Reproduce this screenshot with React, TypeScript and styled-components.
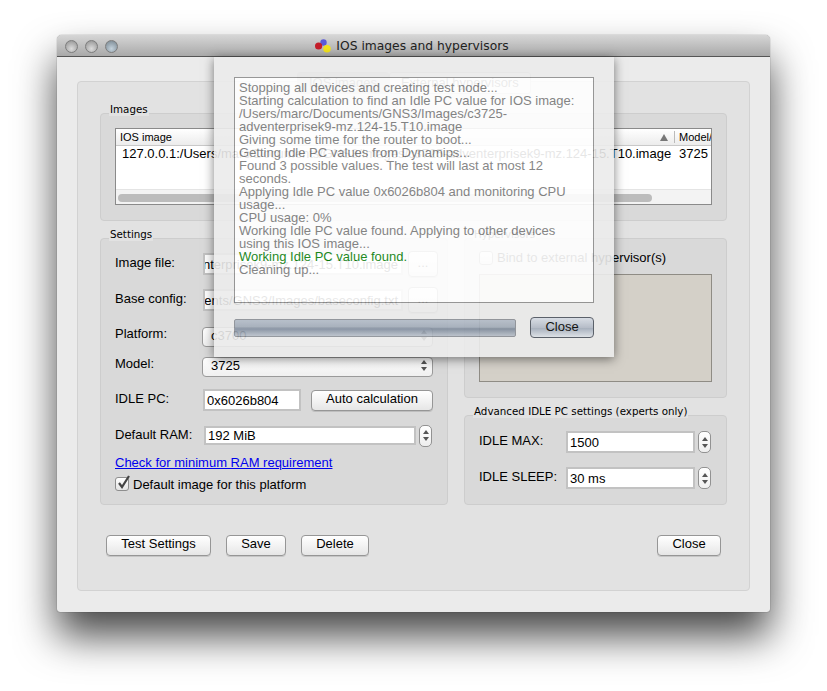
import React from "react";
import styled, {createGlobalStyle} from "styled-components";

const GlobalStyle = createGlobalStyle`
    html, body {
        margin: 0;
        background: #ffffff;
        font-family: "Liberation Sans", Arial, sans-serif;
        color: #000000;
    }
`;

const Desktop = styled.div`
    width: 827px;
    height: 691px;
    padding: 35px 0 0 57px;
    box-sizing: border-box;
    overflow: hidden;
`;

const Window = styled.div`
    position: relative;
    width: 713px;
    height: 577px;
    background: #ebebeb;
    border-radius: 5px 5px 3px 3px;
    box-shadow: 0 24px 40px rgba(0, 0, 0, 0.72), 0 0 1px rgba(0, 0, 0, 0.7);
`;

const TitleBar = styled.div`
    position: relative;
    height: 22px;
    box-sizing: border-box;
    display: flex;
    align-items: center;
    justify-content: center;
    gap: 5px;
    padding-right: 3px;
    background: linear-gradient(#d6d6d6, #a9a9a9);
    border-bottom: 1px solid #555555;
    border-radius: 5px 5px 0 0;
    font-family: "DejaVu Sans", sans-serif;
    font-size: 12.3px;
    color: #222222;
`;

const Lights = styled.div`
    position: absolute;
    left: 8px;
    top: 5px;
    display: flex;
    gap: 7px;
`;

const Light = styled.span<{$tint?: boolean}>`
    width: 13px;
    height: 13px;
    box-sizing: border-box;
    border-radius: 50%;
    border: 1px solid #7d7d7d;
    background: ${p => p.$tint
        ? "radial-gradient(circle at 50% 70%, #c4d2dc, #75838d)"
        : "radial-gradient(circle at 50% 70%, #dcdcdc, #8f8f8f)"};
`;

const Body = styled.div`
    padding: 24px 20px 21px 20px;
`;

const Pane = styled.div`
    height: 510px;
    box-sizing: border-box;
    padding: 31px 22px 0 22px;
    background: #e2e2e2;
    border: 1px solid #d2d2d2;
    border-radius: 4px;
`;

const TabStrip = styled.div`
    position: absolute;
    left: 240px;
    top: 37px;
    display: flex;
    font-size: 13px;
    color: #333333;
`;

const Tab = styled.div<{$active?: boolean}>`
    height: 20px;
    line-height: 20px;
    padding: 0 11px;
    border: 1px solid #c2c2c2;
    border-radius: 3px;
    background: ${p => p.$active ? "#c6c6c6" : "#f2f2f2"};
`;

const Group = styled.div<{$height: number}>`
    position: relative;
    height: ${p => p.$height}px;
    box-sizing: border-box;
    background: #d9d9d9;
    border: 1px solid #cdcdcd;
    border-radius: 4px;
`;

const GroupLabel = styled.span`
    position: absolute;
    left: 8px;
    top: -11px;
    padding: 0 1px;
    background: #e2e2e2;
    font-family: "DejaVu Sans", sans-serif;
    font-size: 10.3px;
    line-height: 13px;
    white-space: nowrap;
`;

const ImageTable = styled.div`
    margin: 14px 14px 0 14px;
    height: 77px;
    box-sizing: border-box;
    display: flex;
    flex-direction: column;
    background: #ffffff;
    border: 1px solid #8a8a8a;
`;

const TableHead = styled.div`
    height: 17px;
    flex: none;
    display: flex;
    align-items: center;
    padding-left: 4px;
    box-sizing: border-box;
    background: linear-gradient(#ffffff, #ececec);
    border-bottom: 1px solid #c9c9c9;
    font-size: 11px;
`;

const HeadTitle = styled.span`
    flex: 1;
`;

const SortArrow = styled.span`
    width: 0;
    height: 0;
    margin-right: 6px;
    border-left: 4px solid transparent;
    border-right: 4px solid transparent;
    border-bottom: 7px solid #777777;
`;

const ModelHead = styled.div`
    width: 37px;
    height: 12px;
    line-height: 12px;
    padding-left: 4px;
    box-sizing: border-box;
    overflow: hidden;
    white-space: nowrap;
    border-left: 1px solid #bbbbbb;
`;

const TableRow = styled.div`
    flex: 1;
    display: flex;
    justify-content: space-between;
    padding: 0 3px 0 6px;
    font-size: 13px;
    line-height: 15px;
    white-space: nowrap;
`;

const ScrollTrack = styled.div`
    height: 15px;
    flex: none;
    padding: 4px 59px 3px 2px;
    box-sizing: border-box;
    background: #f3f3f3;
    border-top: 1px solid #e4e4e4;
`;

const ScrollThumb = styled.div`
    height: 8px;
    border-radius: 4px;
    background: #bcbcbc;
`;

const Columns = styled.div`
    display: grid;
    grid-template-columns: 348px 263px;
    column-gap: 16px;
    margin-top: 17px;
`;

const RightColumn = styled.div`
    display: flex;
    flex-direction: column;
    gap: 17px;
`;

const SettingsForm = styled.div`
    padding: 14px 14px 0 14px;
`;

const Row = styled.div<{$top: number; $height: number}>`
    display: flex;
    align-items: center;
    height: ${p => p.$height}px;
    margin-top: ${p => p.$top}px;
`;

const Label = styled.span<{$width: number; $lift?: number}>`
    flex: none;
    width: ${p => p.$width}px;
    font-size: 13px;
    margin-bottom: ${p => (p.$lift ?? 2) * 2}px;
`;

const Field = styled.div<{$width: number; $end?: boolean}>`
    flex: none;
    width: ${p => p.$width}px;
    height: 100%;
    box-sizing: border-box;
    display: flex;
    align-items: center;
    justify-content: ${p => p.$end ? "flex-end" : "flex-start"};
    padding: 0 3px 0 2px;
    overflow: hidden;
    white-space: nowrap;
    background: #ffffff;
    border: 2px solid #c2c2c2;
    font-size: 13px;
`;

const Select = styled.div`
    flex: none;
    width: 231px;
    height: 100%;
    box-sizing: border-box;
    display: flex;
    align-items: center;
    justify-content: space-between;
    padding: 0 5px 3px 8px;
    background: linear-gradient(#ffffff, #f0f0f0);
    border: 1px solid #9a9a9a;
    border-radius: 4px;
    font-size: 13px;
`;

const Updown = styled.span`
    display: flex;
    flex-direction: column;
    gap: 3px;
    align-items: center;
`;

const ArrowUp = styled.span`
    width: 0;
    height: 0;
    border-left: 3px solid transparent;
    border-right: 3px solid transparent;
    border-bottom: 4px solid #555555;
`;

const ArrowDown = styled.span`
    width: 0;
    height: 0;
    border-left: 3px solid transparent;
    border-right: 3px solid transparent;
    border-top: 4px solid #555555;
`;

const Spinner = styled.span`
    flex: none;
    width: 13px;
    height: 22px;
    margin-left: 3px;
    box-sizing: border-box;
    display: flex;
    align-items: center;
    justify-content: center;
    background: linear-gradient(#ffffff, #eeeeee);
    border: 1px solid #929292;
    border-radius: 5px;
`;

const PushButton = styled.button<{$width: number; $left?: number}>`
    flex: none;
    width: ${p => p.$width}px;
    height: 21px;
    margin-left: ${p => p.$left ?? 0}px;
    padding: 0 0 4px;
    background: linear-gradient(#ffffff, #f3f3f3 50%, #e6e6e6);
    border: 1px solid #969696;
    border-radius: 4px;
    box-shadow: 0 1px 0 rgba(0, 0, 0, 0.12);
    font-family: "Liberation Sans", Arial, sans-serif;
    font-size: 13px;
    color: #000000;
`;

const Browse = styled(PushButton)`
    height: 26px;
`;

const LinkText = styled.a`
    color: #0000ee;
    text-decoration: underline;
    font-size: 13px;
    white-space: nowrap;
`;

const Check = styled.span`
    flex: none;
    position: relative;
    width: 14px;
    height: 14px;
    box-sizing: border-box;
    background: linear-gradient(#ffffff, #e4e4e4);
    border: 1px solid #8e8e8e;
    border-radius: 3px;
`;

const CheckMark = styled.svg`
    position: absolute;
    left: 0;
    top: -4px;
    width: 15px;
    height: 16px;
`;

const CheckText = styled.span`
    margin-left: 4px;
    font-size: 13px;
    white-space: nowrap;
`;

const HyperForm = styled.div`
    padding: 12px 14px 0 14px;
`;

const HyperList = styled.div`
    height: 108px;
    margin-top: 10px;
    box-sizing: border-box;
    background: #d4d0c8;
    border: 1px solid #8f8c85;
`;

const AdvancedForm = styled.div`
    padding: 15px 14px 0 14px;
`;

const ButtonBar = styled.div`
    display: flex;
    align-items: center;
    gap: 15px;
    margin: 30px 6px 0 6px;
`;

const Spacer = styled.div`
    flex: 1;
`;

const Dialog = styled.div`
    position: absolute;
    left: 157px;
    top: 22px;
    width: 400px;
    height: 300px;
    box-sizing: border-box;
    padding: 20px;
    background: #ececec;
    opacity: 0.9;
    box-shadow: 0 2px 10px rgba(0, 0, 0, 0.55);
`;

const LogBox = styled.div`
    height: 226px;
    box-sizing: border-box;
    padding: 3px 4px;
    background: #ffffff;
    border: 1px solid #8e8e8e;
    font-size: 13px;
    line-height: 13px;
    color: #7a7a7a;
`;

const LogLine = styled.div<{$ok?: boolean}>`
    white-space: nowrap;
    color: ${p => p.$ok ? "#0a800a" : "inherit"};
`;

const DialogFooter = styled.div`
    display: flex;
    align-items: center;
    justify-content: space-between;
    margin-top: 14px;
`;

const ProgressBar = styled.div`
    width: 282px;
    height: 18px;
    box-sizing: border-box;
    border: 1px solid #8b8f96;
    border-radius: 2px;
    background: linear-gradient(#b4bdc9, #a3adba 45%, #7e8a9b 55%, #a6afbb 85%, #b8bfc9);
`;

const DefaultButton = styled.button`
    width: 64px;
    height: 21px;
    padding: 0 0 3px;
    background: linear-gradient(#d9dfe8, #b4bcc9 50%, #a5afbe 55%, #dfe4ea);
    border: 1px solid #4f5560;
    border-radius: 4px;
    font-family: "Liberation Sans", Arial, sans-serif;
    font-size: 13px;
    color: #000000;
`;

const logLines = [
    "Stopping all devices and creating test node...",
    "Starting calculation to find an Idle PC value for IOS image:",
    "/Users/marc/Documents/GNS3/Images/c3725-",
    "adventerprisek9-mz.124-15.T10.image",
    "Giving some time for the router to boot...",
    "Getting Idle PC values from Dynamips...",
    "Found 3 possible values. The test will last at most 12",
    "seconds.",
    "Applying Idle PC value 0x6026b804 and monitoring CPU",
    "usage...",
    "CPU usage: 0%",
    "Working Idle PC value found. Applying to other devices",
    "using this IOS image...",
];

const Arrows = () => (
    <Updown>
        <ArrowUp />
        <ArrowDown />
    </Updown>
);

const App = () => {
    return (
        <Desktop>
            <GlobalStyle />
            <Window>
                <TitleBar>
                    <Lights>
                        <Light />
                        <Light />
                        <Light $tint />
                    </Lights>
                    <svg width="16" height="14" viewBox="0 0 16 14">
                        <circle cx="8.5" cy="3.5" r="3.2" fill="#5a5ad8" />
                        <circle cx="3.6" cy="7" r="3.6" fill="#c41e2a" />
                        <circle cx="12" cy="9.8" r="3.8" fill="#f2e21c" />
                    </svg>
                    IOS images and hypervisors
                </TitleBar>
                <Body>
                    <Pane>
                        <Group $height={108}>
                            <GroupLabel>Images</GroupLabel>
                            <ImageTable>
                                <TableHead>
                                    <HeadTitle>IOS image</HeadTitle>
                                    <SortArrow />
                                    <ModelHead>Model/Chassis</ModelHead>
                                </TableHead>
                                <TableRow>
                                    <span>127.0.0.1:/Users/marc/Documents/GNS3/Images/c3725-adventerprisek9-mz.124-15.T10.image</span>
                                    <span>3725</span>
                                </TableRow>
                                <ScrollTrack>
                                    <ScrollThumb />
                                </ScrollTrack>
                            </ImageTable>
                        </Group>
                        <Columns>
                            <Group $height={267}>
                                <GroupLabel>Settings</GroupLabel>
                                <SettingsForm>
                                    <Row $top={0} $height={22}>
                                        <Label $width={88}>Image file:</Label>
                                        <Field $width={200} $end>/Users/marc/Documents/GNS3/Images/c3725-adventerprisek9-mz.124-15.T10.image</Field>
                                        <Browse $width={30} $left={5}>...</Browse>
                                    </Row>
                                    <Row $top={14} $height={22}>
                                        <Label $width={88}>Base config:</Label>
                                        <Field $width={200} $end>/Users/marc/Documents/GNS3/Images/baseconfig.txt</Field>
                                        <Browse $width={30} $left={5}>...</Browse>
                                    </Row>
                                    <Row $top={16} $height={20}>
                                        <Label $width={87} $lift={4}>Platform:</Label>
                                        <Select>c3700<Arrows /></Select>
                                    </Row>
                                    <Row $top={10} $height={20}>
                                        <Label $width={87} $lift={4}>Model:</Label>
                                        <Select>3725<Arrows /></Select>
                                    </Row>
                                    <Row $top={12} $height={22}>
                                        <Label $width={88}>IDLE PC:</Label>
                                        <Field $width={98}>0x6026b804</Field>
                                        <PushButton $width={122} $left={10}>Auto calculation</PushButton>
                                    </Row>
                                    <Row $top={15} $height={19}>
                                        <Label $width={89} $lift={1}>Default RAM:</Label>
                                        <Field $width={212}>192 MiB</Field>
                                        <Spinner><Arrows /></Spinner>
                                    </Row>
                                    <Row $top={9} $height={16}>
                                        <LinkText href="#">Check for minimum RAM requirement</LinkText>
                                    </Row>
                                    <Row $top={6} $height={16}>
                                        <Check>
                                            <CheckMark viewBox="0 0 15 16">
                                                <path d="M3 9 L6 13 L13 2" fill="none" stroke="#444444" strokeWidth="2.2" />
                                            </CheckMark>
                                        </Check>
                                        <CheckText>Default image for this platform</CheckText>
                                    </Row>
                                </SettingsForm>
                            </Group>
                            <RightColumn>
                                <Group $height={160}>
                                    <GroupLabel>Hypervisors</GroupLabel>
                                    <HyperForm>
                                        <Row $top={0} $height={13}>
                                            <Check />
                                            <CheckText>Bind to external hypervisor(s)</CheckText>
                                        </Row>
                                        <HyperList />
                                    </HyperForm>
                                </Group>
                                <Group $height={90}>
                                    <GroupLabel>Advanced IDLE PC settings (experts only)</GroupLabel>
                                    <AdvancedForm>
                                        <Row $top={0} $height={22}>
                                            <Label $width={87}>IDLE MAX:</Label>
                                            <Field $width={129}>1500</Field>
                                            <Spinner><Arrows /></Spinner>
                                        </Row>
                                        <Row $top={14} $height={22}>
                                            <Label $width={87}>IDLE SLEEP:</Label>
                                            <Field $width={129}>30 ms</Field>
                                            <Spinner><Arrows /></Spinner>
                                        </Row>
                                    </AdvancedForm>
                                </Group>
                            </RightColumn>
                        </Columns>
                        <ButtonBar>
                            <PushButton $width={105}>Test Settings</PushButton>
                            <PushButton $width={60}>Save</PushButton>
                            <PushButton $width={68}>Delete</PushButton>
                            <Spacer />
                            <PushButton $width={64}>Close</PushButton>
                        </ButtonBar>
                    </Pane>
                </Body>
                <TabStrip>
                    <Tab $active>IOS images</Tab>
                    <Tab>External hypervisors</Tab>
                </TabStrip>
                <Dialog>
                    <LogBox>
                        {logLines.map((line) => (
                            <LogLine key={line}>{line}</LogLine>
                        ))}
                        <LogLine $ok>Working Idle PC value found.</LogLine>
                        <LogLine>Cleaning up...</LogLine>
                    </LogBox>
                    <DialogFooter>
                        <ProgressBar />
                        <DefaultButton>Close</DefaultButton>
                    </DialogFooter>
                </Dialog>
            </Window>
        </Desktop>
    );
};

export default App;
